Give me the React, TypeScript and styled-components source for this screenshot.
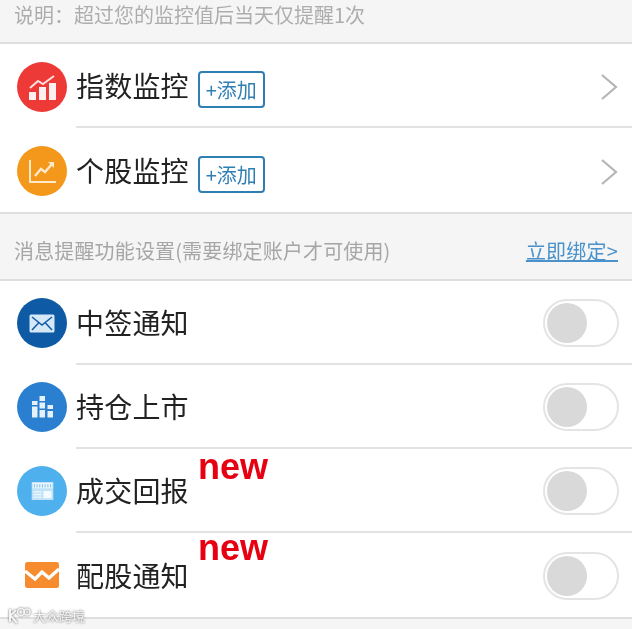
import styled, { createGlobalStyle } from 'styled-components';
import type { ReactNode } from 'react';

const GlobalStyle = createGlobalStyle`
    html, body {
        margin: 0;
        padding: 0;
        background: #f5f5f5;
    }

    body {
        font-family: "Noto Sans CJK SC", "Liberation Sans", sans-serif;
    }
`;

const Page = styled.div`
    position: relative;
    width: 632px;
    height: 629px;
    overflow: hidden;
    background: #f5f5f5;
    filter: blur(0.45px);
`;

const Note = styled.div`
    box-sizing: border-box;
    height: 44px;
    padding: 0 14px 12px;
    display: flex;
    align-items: center;
    font-size: 20px;
    line-height: 30px;
    color: #adadad;
    border-bottom: 2px solid #dedede;
`;

const Group = styled.div`
    background: #fff;
    border-bottom: 2px solid #dedede;
`;

const Row = styled.div`
    height: 84px;
    padding-left: 17px;
    display: flex;
    align-items: stretch;
`;

const IconSlot = styled.div<{ $raised?: boolean }>`
    width: 50px;
    margin-right: 9px;
    padding-top: ${(p) => (p.$raised ? 0 : 2)}px;
    display: flex;
    align-items: center;
    justify-content: center;
`;

const Disc = styled.div<{ $color: string }>`
    width: 50px;
    height: 50px;
    border-radius: 50%;
    background: ${(p) => p.$color};
    display: flex;
    align-items: center;
    justify-content: center;
`;

const RowBody = styled.div<{ $last?: boolean }>`
    flex: 1;
    min-width: 0;
    padding: 2px 13px 0 0;
    display: flex;
    align-items: center;
    border-bottom: ${(p) => (p.$last ? 'none' : '2px solid #e2e2e2')};
`;

const Title = styled.span`
    margin-top: -2px;
    font-size: 28px;
    letter-spacing: 0.2px;
    line-height: 40px;
    color: #222;
`;

const AddTag = styled.span`
    box-sizing: border-box;
    width: 67px;
    height: 37px;
    margin: 7px 0 0 9px;
    border: 2px solid #2f7fb5;
    border-radius: 4px;
    display: flex;
    align-items: center;
    justify-content: center;
    font-size: 20px;
    line-height: 1;
    color: #2f7fb5;
`;

const Chevron = styled.svg`
    margin: 2px 0 0 auto;
`;

const Toggle = styled.div`
    box-sizing: border-box;
    width: 76px;
    height: 48px;
    margin-left: auto;
    padding: 2px;
    border: 2px solid #e4e4e4;
    border-radius: 24px;
    background: #fff;
`;

const Knob = styled.div`
    width: 40px;
    height: 40px;
    border-radius: 50%;
    background: #d9d9d9;
`;

const SectionHead = styled.div`
    box-sizing: border-box;
    height: 67px;
    padding: 8px 14px 0;
    display: flex;
    align-items: center;
    justify-content: space-between;
    font-size: 20px;
    color: #a6a6a6;
    border-bottom: 2px solid #dedede;
`;

const SectionLabel = styled.span`
    letter-spacing: 0.15px;
`;

const BindLink = styled.a`
    color: #4a92cc;
    letter-spacing: 0.2px;
    text-decoration: underline;
`;

const NewBadge = styled.span<{ $top: number }>`
    position: absolute;
    left: 198px;
    top: ${(p) => p.$top}px;
    font-family: "Liberation Sans", Arial, sans-serif;
    font-weight: bold;
    font-size: 36px;
    line-height: 36px;
    color: #e60012;
`;

const Watermark = styled.div`
    position: absolute;
    left: 7px;
    top: 606px;
    display: flex;
    align-items: center;
    gap: 2px;
    font-size: 13px;
    line-height: 20px;
    color: #f4f4f4;
    filter: drop-shadow(0 0 1px #666);
`;

const IndexIcon = () => (
    <svg width="27" height="25" viewBox="0 0 27 25">
        <g fill="#fff" opacity="0.92">
            <rect x="0" y="17" width="7" height="8" />
            <rect x="10" y="12" width="7" height="13" />
            <rect x="20" y="8" width="7" height="17" />
        </g>
        <path d="M1 13 L9 6 L14 9 L25 1" fill="none" stroke="#fff" strokeOpacity="0.85" strokeWidth="2" />
    </svg>
);

const StockIcon = () => (
    <svg width="27" height="23" viewBox="0 0 27 23">
        <path d="M1 0 V22 H27" fill="none" stroke="#ffe9c8" strokeWidth="2" />
        <path d="M6 16 L12 9 L16 12 L23 4" fill="none" stroke="#ffe9c8" strokeWidth="2.4" />
        <path d="M19 2 H25 V8" fill="#ffe9c8" />
    </svg>
);

const MailIcon = () => (
    <svg width="26" height="19" viewBox="0 0 26 19">
        <rect x="0.5" y="0.5" width="25" height="18" rx="1.5" fill="#d5e8f7" />
        <path d="M3 3 L13 11 L23 3 M3 16 L10 8.5 M23 16 L16 8.5" fill="none" stroke="#0f5aa5" strokeWidth="1.5" />
    </svg>
);

const BarsIcon = () => (
    <svg width="21" height="22" viewBox="0 0 21 22">
        <g fill="#e4f0fa">
            <rect x="0" y="5" width="5.5" height="4" />
            <rect x="0" y="10.5" width="5.5" height="11" />
            <rect x="7.5" y="0" width="5.5" height="5" />
            <rect x="7.5" y="6.5" width="5.5" height="6" />
            <rect x="7.5" y="14" width="5.5" height="7.5" />
            <rect x="15.5" y="9" width="5.5" height="4" />
            <rect x="15.5" y="15" width="5.5" height="6.5" />
        </g>
    </svg>
);

const NewsIcon = () => (
    <svg width="23" height="18" viewBox="0 0 24 20">
        <rect width="24" height="20" fill="#bfe2f8" />
        <rect x="1" y="1" width="22" height="6" fill="#e9f6fd" />
        <path d="M3 6 V2.5 M6 6 V2.5 M9 6 V2.5 M12 6 V2.5 M15 6 V2.5 M18 6 V2.5 M21 6 V2.5" stroke="#6db9e8" strokeWidth="1" />
        <rect x="13" y="10" width="9" height="8" fill="#f4fbff" />
        <path d="M2 11 H11 M2 14 H11 M2 17 H11" stroke="#f0f9fe" strokeWidth="1.2" />
    </svg>
);

const OrangeMail = () => (
    <svg width="34" height="26" viewBox="0 0 34 26">
        <rect width="34" height="26" rx="2.5" fill="#f68c2f" />
        <path d="M0 9 L10 17 L17 10 L24 16 L34 7" fill="none" stroke="#fff" strokeWidth="3.2" />
    </svg>
);

const ArrowRight = () => (
    <Chevron width="19" height="28" viewBox="0 0 19 28">
        <path d="M2 2 L16 14 L2 26" fill="none" stroke="#b5b5b5" strokeWidth="2.2" />
    </Chevron>
);

const Switch = () => (
    <Toggle>
        <Knob />
    </Toggle>
);

type ListRowProps = {
    icon: ReactNode,
    title: string,
    last?: boolean,
    raised?: boolean,
    children: ReactNode,
};

function ListRow({ icon, title, last, raised, children }: ListRowProps) {
    return (
        <Row>
            <IconSlot $raised={raised}>{icon}</IconSlot>
            <RowBody $last={last}>
                <Title>{title}</Title>
                {children}
            </RowBody>
        </Row>
    );
}

export default function App() {
    return (
        <Page>
            <GlobalStyle />
            <Note>说明：超过您的监控值后当天仅提醒1次</Note>
            <Group>
                <ListRow icon={<Disc $color="#ee3a36"><IndexIcon /></Disc>} title="指数监控">
                    <AddTag>+添加</AddTag>
                    <ArrowRight />
                </ListRow>
                <ListRow icon={<Disc $color="#f3981b"><StockIcon /></Disc>} title="个股监控" last>
                    <AddTag>+添加</AddTag>
                    <ArrowRight />
                </ListRow>
            </Group>
            <SectionHead>
                <SectionLabel>消息提醒功能设置(需要绑定账户才可使用)</SectionLabel>
                <BindLink>立即绑定&gt;</BindLink>
            </SectionHead>
            <Group>
                <ListRow icon={<Disc $color="#0f5aa5"><MailIcon /></Disc>} title="中签通知" raised>
                    <Switch />
                </ListRow>
                <ListRow icon={<Disc $color="#2a7fd0"><BarsIcon /></Disc>} title="持仓上市" raised>
                    <Switch />
                </ListRow>
                <ListRow icon={<Disc $color="#4fb0ee"><NewsIcon /></Disc>} title="成交回报" raised>
                    <Switch />
                </ListRow>
                <ListRow icon={<OrangeMail />} title="配股通知" last raised>
                    <Switch />
                </ListRow>
            </Group>
            <NewBadge $top={449}>new</NewBadge>
            <NewBadge $top={530}>new</NewBadge>
            <Watermark>
                <svg width="24" height="18" viewBox="0 0 24 18">
                    <path d="M3 2 V15 M3 9 L9 3 M4 9 L10 16" fill="none" stroke="#f4f4f4" strokeWidth="2" />
                    <circle cx="14" cy="5" r="3.5" fill="none" stroke="#f4f4f4" strokeWidth="1.6" />
                    <circle cx="20" cy="5" r="3" fill="none" stroke="#f4f4f4" strokeWidth="1.6" />
                </svg>
                <span>大众跨境</span>
            </Watermark>
        </Page>
    );
}
